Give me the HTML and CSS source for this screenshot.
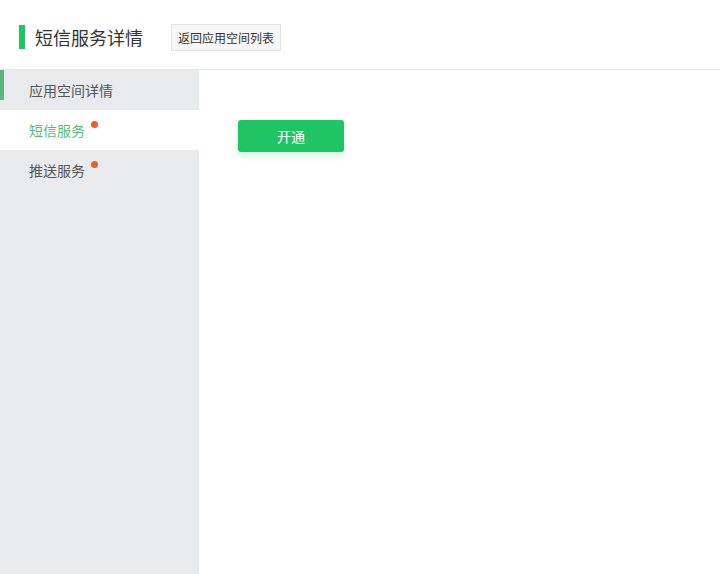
FILE: index.html
```html
<!DOCTYPE html>
<html>
<head>
    <meta charset="utf-8">
    <link rel="stylesheet" href="styles.css">
</head>
<body>
<div class="header">
    <div class="header-bar"></div>
    <div class="header-title">短信服务详情</div>
    <button class="back-btn">返回应用空间列表</button>
</div>
<div class="main">
    <div class="sidebar">
        <div class="nav-item nav-marked">应用空间详情</div>
        <div class="nav-item active">短信服务<span class="nav-dot"></span></div>
        <div class="nav-item">推送服务<span class="nav-dot"></span></div>
    </div>
    <div class="content">
        <button class="open-btn">开通</button>
    </div>
</div>
</body>
</html>
```

FILE: styles.css
```css
html, body {
    height: 100%;
}
body {
    margin: 0;
    font-family: "Noto Sans CJK SC", "Liberation Sans", sans-serif;
    background: #fff;
    display: flex;
    flex-direction: column;
}
.header {
    height: 64px;
    padding-top: 5px;
    border-bottom: 1px solid #e6e6e6;
    display: flex;
    align-items: center;
    padding-left: 19px;
    box-sizing: content-box;
}
.header-bar {
    width: 6px;
    height: 24px;
    background: #21c464;
    margin-right: 10px;
}
.header-title {
    font-size: 18px;
    color: #333;
    margin-right: 28px;
}
.back-btn {
    height: 27px;
    padding: 0 6px;
    background: #f7f7f7;
    border: 1px solid #e3e3e3;
    font-family: inherit;
    font-size: 12px;
    color: #333;
    cursor: pointer;
}
.main {
    flex: 1;
    display: flex;
}
.sidebar {
    width: 199px;
    background: #e9eaee;
}
.nav-item {
    position: relative;
    height: 40px;
    line-height: 40px;
    padding-left: 29px;
    font-size: 14px;
    color: #555;
}
.nav-marked::before {
    content: "";
    position: absolute;
    left: 0;
    top: 0;
    width: 4px;
    height: 30px;
    background: #5cb87a;
}
.nav-item.active {
    background: #fff;
    color: #5cb87a;
}
.nav-dot {
    position: absolute;
    top: 11px;
    margin-left: 6px;
    width: 7px;
    height: 7px;
    border-radius: 50%;
    background: #e8612c;
}
.content {
    flex: 1;
    padding: 50px 0 0 39px;
}
.open-btn {
    width: 106px;
    height: 32px;
    background: #21c464;
    color: #fff;
    border: none;
    border-radius: 3px;
    font-family: inherit;
    font-size: 14px;
    box-shadow: 0 4px 6px rgba(33, 196, 100, 0.2);
    cursor: pointer;
}
```
